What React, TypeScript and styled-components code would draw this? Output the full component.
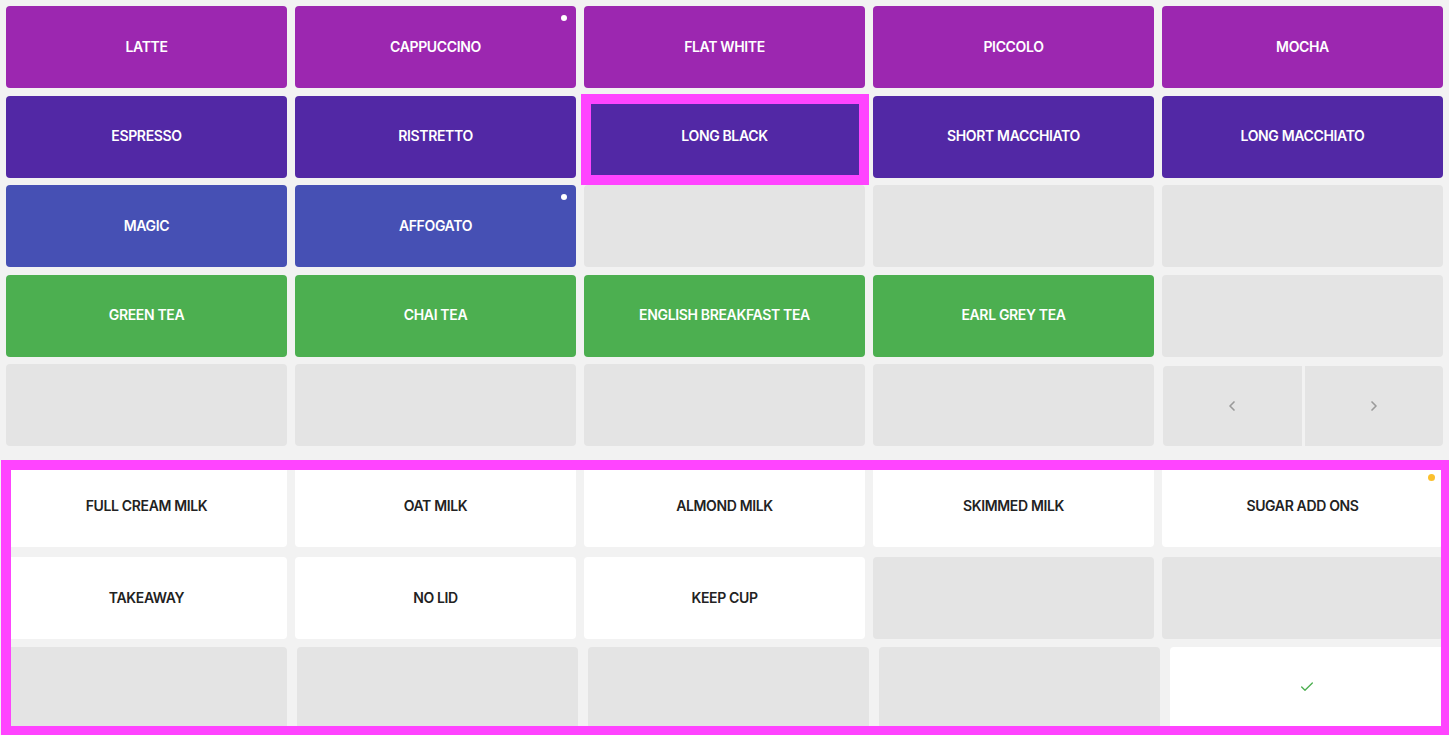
import { ReactElement } from 'react';
import styled, { createGlobalStyle } from 'styled-components';
import { Check, ChevronLeft, ChevronRight } from 'lucide-react';

const GlobalStyle = createGlobalStyle`
  html, body {
    margin: 0;
    height: 100%;
    overflow: hidden;
    background: #f2f2f2;
  }
  body {
    font-family: Inter, 'Noto Sans', 'Liberation Sans', sans-serif;
  }
`;

const Page = styled.div`
  display: flex;
  flex-direction: column;
  gap: 19px;
  padding: 6px;
  width: 1437px;
`;

const Grid = styled.div<{ rowGap: number }>`
  display: grid;
  grid-template-columns: repeat(5, 281px);
  grid-auto-rows: 82px;
  column-gap: 8px;
  row-gap: ${({ rowGap }) => rowGap}px;
`;

const Tile = styled.div<{ bg: string; fg: string }>`
  position: relative;
  display: flex;
  align-items: center;
  justify-content: center;
  padding-bottom: 2px;
  border-radius: 4px;
  background: ${({ bg }) => bg};
  color: ${({ fg }) => fg};
  font-size: 14px;
  font-weight: 600;
  letter-spacing: -0.35px;
  text-transform: uppercase;
`;

const Selected = styled.div`
  position: absolute;
  top: -2px;
  left: -3px;
  right: -4px;
  bottom: -7px;
  border: 10px solid #ff44ff;
  pointer-events: none;
`;

const Dot = styled.span<{ color: string; size: number }>`
  position: absolute;
  top: ${({ size }) => 12 - size / 2}px;
  right: ${({ size }) => 12 - size / 2}px;
  width: ${({ size }) => size}px;
  height: ${({ size }) => size}px;
  border-radius: 50%;
  background: ${({ color }) => color};
`;

const Pager = styled.div`
  display: flex;
  gap: 3px;
  margin-top: 2px;
  margin-left: 1px;
`;

const PageButton = styled.div<{ side: 'left' | 'right' }>`
  flex: 1;
  display: flex;
  align-items: center;
  justify-content: center;
  background: #e4e4e4;
  color: #9a9a9a;
  border-radius: ${({ side }) => (side === 'left' ? '4px 0 0 4px' : '0 4px 4px 0')};
`;

const Panel = styled.div`
  position: relative;
  display: flex;
  flex-direction: column;
  gap: 8px;
`;

const LastRow = styled.div`
  display: flex;
  gap: 10px;
  height: 82px;

  > div {
    flex: 0 0 281px;
  }
`;

const Frame = styled.div`
  position: absolute;
  top: -5px;
  left: -5px;
  right: -8px;
  bottom: -7px;
  border: 10px solid #ff44ff;
  pointer-events: none;
`;

const PURPLE = '#9c27b0';
const DEEP = '#5228a5';
const INDIGO = '#4650b4';
const GREEN = '#4caf50';
const EMPTY = '#e4e4e4';

type Item = { label?: string; bg: string; dot?: boolean; selected?: boolean };

const drinks: Item[] = [
  { label: 'Latte', bg: PURPLE },
  { label: 'Cappuccino', bg: PURPLE, dot: true },
  { label: 'Flat White', bg: PURPLE },
  { label: 'Piccolo', bg: PURPLE },
  { label: 'Mocha', bg: PURPLE },
  { label: 'Espresso', bg: DEEP },
  { label: 'Ristretto', bg: DEEP },
  { label: 'Long Black', bg: DEEP, selected: true },
  { label: 'Short Macchiato', bg: DEEP },
  { label: 'Long Macchiato', bg: DEEP },
  { label: 'Magic', bg: INDIGO },
  { label: 'Affogato', bg: INDIGO, dot: true },
  { bg: EMPTY },
  { bg: EMPTY },
  { bg: EMPTY },
  { label: 'Green Tea', bg: GREEN },
  { label: 'Chai Tea', bg: GREEN },
  { label: 'English Breakfast Tea', bg: GREEN },
  { label: 'Earl Grey Tea', bg: GREEN },
  { bg: EMPTY },
  { bg: EMPTY },
  { bg: EMPTY },
  { bg: EMPTY },
  { bg: EMPTY },
];

const options: Item[] = [
  { label: 'Full Cream Milk', bg: '#fff' },
  { label: 'Oat Milk', bg: '#fff' },
  { label: 'Almond Milk', bg: '#fff' },
  { label: 'Skimmed Milk', bg: '#fff' },
  { label: 'Sugar Add Ons', bg: '#fff', dot: true },
  { label: 'Takeaway', bg: '#fff' },
  { label: 'No Lid', bg: '#fff' },
  { label: 'Keep Cup', bg: '#fff' },
  { bg: EMPTY },
  { bg: EMPTY },
];

const App = (): ReactElement => {
  return (
    <>
      <GlobalStyle />
      <Page>
        <Grid rowGap={7.5}>
          {drinks.map((d, i) => (
            <Tile key={i} bg={d.bg} fg="#fff">
              {d.label}
              {d.dot && <Dot color="#fff" size={6} />}
              {d.selected && <Selected />}
            </Tile>
          ))}
          <Pager>
            <PageButton side="left">
              <ChevronLeft size={16} strokeWidth={2.5} />
            </PageButton>
            <PageButton side="right">
              <ChevronRight size={16} strokeWidth={2.5} />
            </PageButton>
          </Pager>
        </Grid>
        <Panel>
          <Grid rowGap={10}>
            {options.map((o, i) => (
              <Tile key={i} bg={o.bg} fg="#222">
                {o.label}
                {o.dot && <Dot color="#fbc02d" size={7} />}
              </Tile>
            ))}
          </Grid>
          <LastRow>
            <Tile bg={EMPTY} fg="#222" />
            <Tile bg={EMPTY} fg="#222" />
            <Tile bg={EMPTY} fg="#222" />
            <Tile bg={EMPTY} fg="#222" />
            <Tile bg="#fff" fg={GREEN}>
              <Check size={16} strokeWidth={2} style={{ marginRight: 8 }} />
            </Tile>
          </LastRow>
          <Frame />
        </Panel>
      </Page>
    </>
  );
};

export default App;
